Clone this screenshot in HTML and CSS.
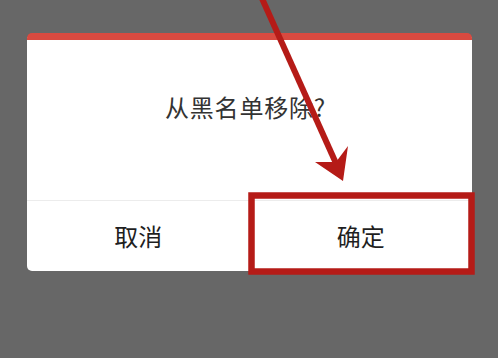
FILE: index.html
```html
<!DOCTYPE html>
<html lang="zh">
<head>
<meta charset="utf-8">
<link rel="stylesheet" href="styles.css">
</head>
<body>
<div class="stage">
  <div class="dialog">
    <div class="title">从黑名单移除?</div>
    <div class="actions">
      <div class="btn">取消</div>
      <div class="btn">确定</div>
    </div>
  </div>
  <svg class="overlay" width="498" height="358" viewBox="0 0 498 358">
    <rect x="251.5" y="195.5" width="220" height="76" fill="none" stroke="#b51b17" stroke-width="6.5"/>
    <line x1="260" y1="-6" x2="339" y2="170" stroke="#b51b17" stroke-width="6"/>
    <polygon points="343,181 315,162 336,162 348,146" fill="#b51b17"/>
  </svg>
</div>
</body>
</html>
```
FILE: styles.css
```css
html, body {
  margin: 0;
  padding: 0;
}
body {
  width: 498px;
  height: 358px;
  background: #676767;
  font-family: "Noto Sans CJK SC", "Noto Sans", sans-serif;
  overflow: hidden;
}
.stage {
  position: relative;
  width: 498px;
  height: 358px;
  padding-top: 33px;
  box-sizing: border-box;
}
.dialog {
  margin-left: 27px;
  width: 445px;
  height: 238px;
  background: #fff;
  border-radius: 5px;
  border-top: 7px solid #d94a40;
  box-sizing: border-box;
  display: flex;
  flex-direction: column;
}
.title {
  height: 161px;
  box-sizing: border-box;
  padding-top: 53px;
  text-align: center;
  font-size: 24px;
  font-weight: 400;
  line-height: 28px;
  letter-spacing: 0.8px;
  color: #333;
  border-bottom: 1px solid #ececec;
  padding-right: 8px;
}
.actions {
  flex: 1;
  display: flex;
}
.btn {
  flex: 1;
  display: flex;
  align-items: center;
  justify-content: center;
  font-size: 24px;
  font-weight: 400;
  color: #1f1f1f;
  padding-bottom: 2px;
}
.overlay {
  position: absolute;
  left: 0;
  top: 0;
}
```
